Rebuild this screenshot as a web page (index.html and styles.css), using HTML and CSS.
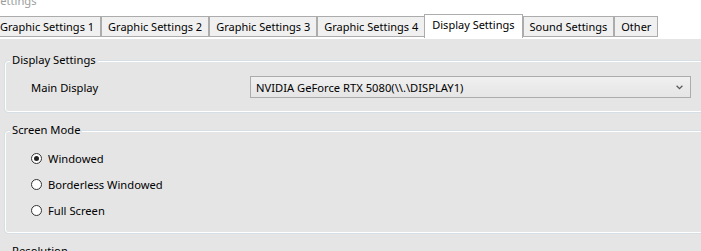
FILE: index.html
```html
<!DOCTYPE html>
<html>
<head>
<meta charset="utf-8">
<title>Settings</title>
<link rel="stylesheet" href="styles.css">
</head>
<body>
<div class="window">
  <div class="titlebar"><span class="title-text">Settings</span></div>
  <div class="tabs">
    <div class="tab">Graphic Settings 1</div>
    <div class="tab">Graphic Settings 2</div>
    <div class="tab">Graphic Settings 3</div>
    <div class="tab">Graphic Settings 4</div>
    <div class="tab active">Display Settings</div>
    <div class="tab">Sound Settings</div>
    <div class="tab">Other</div>
  </div>
  <div class="panel">
    <fieldset class="group group-display">
      <legend>Display Settings</legend>
      <div class="row">
        <span class="label">Main Display</span>
        <div class="combo">
          <span class="combo-text">NVIDIA GeForce RTX 5080(\\.\DISPLAY1)</span>
          <svg class="chev" width="7" height="5" viewBox="0 0 7 5"><path d="M0.6 0.8 L3.5 3.7 L6.4 0.8" fill="none" stroke="#5a5a5a" stroke-width="1.3"/></svg>
        </div>
      </div>
    </fieldset>
    <fieldset class="group group-mode">
      <legend>Screen Mode</legend>
      <div class="radios">
        <div class="radio"><span class="dot checked"></span><span>Windowed</span></div>
        <div class="radio"><span class="dot"></span><span>Borderless Windowed</span></div>
        <div class="radio"><span class="dot"></span><span>Full Screen</span></div>
      </div>
    </fieldset>
    <fieldset class="group group-res">
      <legend>Resolution</legend>
      <div class="spacer"></div>
    </fieldset>
  </div>
</div>
</body>
</html>
```
FILE: styles.css
```css
html, body {
  margin: 0;
  padding: 0;
  background: #ffffff;
  overflow: hidden;
}
body {
  font-family: "Noto Sans", "Open Sans", sans-serif;
  font-size: 11.2px;
  color: #000;
}
.window {
  width: 720px;
}
.titlebar {
  height: 14px;
  overflow: hidden;
}
.title-text {
  display: block;
  margin-top: -7px;
  text-indent: -6px;
  line-height: 16px;
  color: #9d9d9d;
  white-space: nowrap;
}
.tabs {
  display: flex;
  align-items: flex-end;
  height: 23px;
  margin-left: -7px;
  position: relative;
  z-index: 1;
  font-size: 11px;
}
.tab {
  box-sizing: border-box;
  height: 21px;
  border: 1px solid #acacac;
  background: #f0f0f0;
  padding: 0 6px;
  line-height: 19px;
  white-space: nowrap;
}
.tab.active {
  height: 24px;
  margin-bottom: -1px;
  margin-left: -1px;
  padding: 0 7px 3px 7px;
  background: #ffffff;
  border-bottom: none;
  line-height: 19px;
}
.panel {
  background: #e5e5e5;
  border-top: 2px solid #ffffff;
  padding: 13px 0 0 4px;
  height: 240px;
}
.group {
  margin: 0 0 9px;
  padding: 0 0 14px;
  border: 1px solid #d5dfe5;
  border-radius: 4px;
  box-shadow: inset 0 0 0 1px #ffffff;
  min-width: 0;
}
.group legend {
  margin-left: 5px;
  padding: 0 2px;
  line-height: 16px;
  background: #e5e5e5;
}
.row {
  display: flex;
  align-items: center;
  margin-top: 8px;
}
.label {
  margin-left: 26px;
  width: 219px;
}
.combo {
  box-sizing: border-box;
  width: 441px;
  height: 22px;
  border: 1px solid #acacac;
  background: linear-gradient(#f0f0f0, #e5e5e5);
  display: flex;
  align-items: center;
  justify-content: space-between;
  padding: 0 7px 0 5px;
}
.chev {
  display: block;
}
.group-mode {
  padding-bottom: 15px;
}
.radios {
  display: flex;
  flex-direction: column;
  gap: 10px;
  margin-top: 12px;
}
.radio {
  display: flex;
  align-items: center;
  height: 16px;
  margin-left: 26px;
}
.dot {
  box-sizing: border-box;
  width: 11px;
  height: 11px;
  border: 1px solid #333333;
  border-radius: 50%;
  background: #ffffff;
  margin-right: 6px;
  display: flex;
  align-items: center;
  justify-content: center;
}
.dot.checked::after {
  content: "";
  width: 5px;
  height: 5px;
  border-radius: 50%;
  background: #222222;
}
.spacer {
  height: 60px;
}
```
